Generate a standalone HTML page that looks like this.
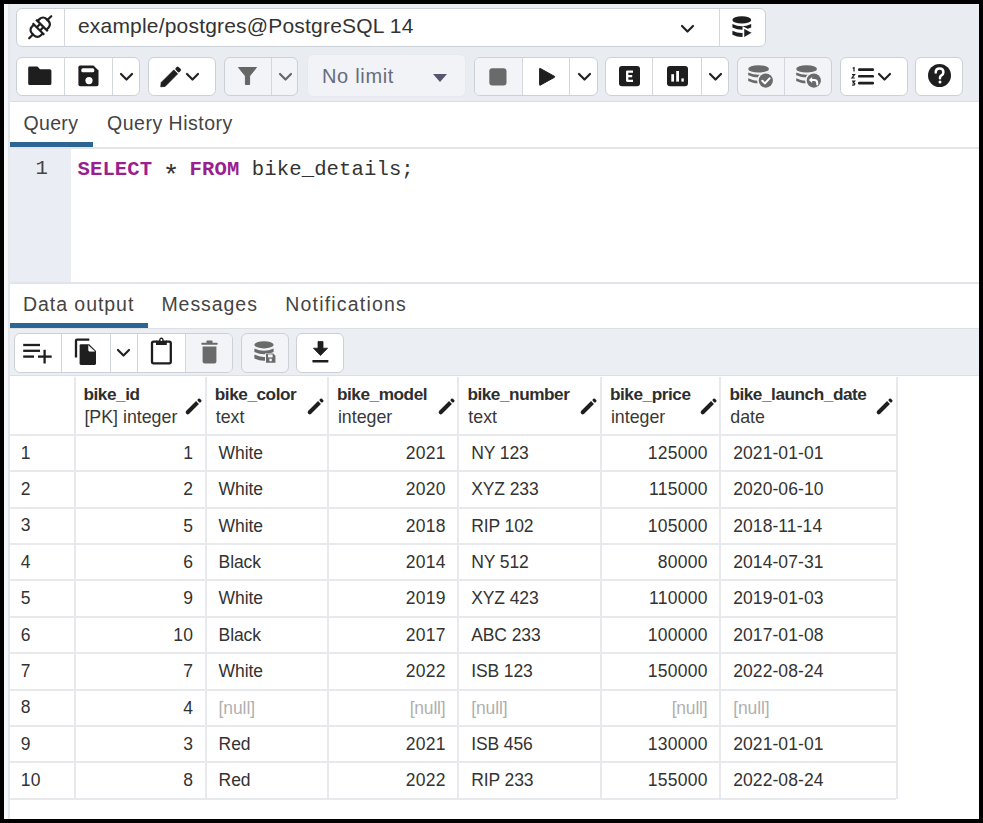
<!DOCTYPE html><html><head><meta charset="utf-8"><style>
*{box-sizing:border-box;margin:0;padding:0}
html,body{width:983px;height:823px;overflow:hidden;background:#000}
body{position:relative;font-family:"Liberation Sans",sans-serif;color:#222}
.a{position:absolute}
.g{position:absolute;border:1px solid #ccd0d7;border-radius:6px;background:#fff;overflow:hidden}
.d{background:#f2f4f7}
.dv{position:absolute;top:0;bottom:0;width:1px;background:#d3d6dc}
svg{position:absolute;overflow:visible}
.t{position:absolute;white-space:nowrap;line-height:1}
</style></head><body><div class="a" style="left:4px;top:4px;width:975px;height:815px;background:#fff;"></div><div class="a" style="left:4px;top:4px;width:5px;height:815px;background:#f6f7f9;"></div><div class="a" style="left:8px;top:4px;width:2px;height:815px;background:#e3e6ea;"></div><div class="a" style="left:10px;top:4px;width:969px;height:98px;background:#e9ecf0;"></div><div class="a" style="left:10px;top:101px;width:969px;height:1.2px;background:#d9dce2;"></div><div class="g " style="left:16px;top:8px;width:750px;height:39px"><div class="dv" style="left:47.2px"></div><div class="dv" style="left:701.5px"></div></div><svg style="left:27px;top:14px" width="26" height="26" viewBox="0 0 26 26"><g transform="translate(13.2 13.2) rotate(-45)" fill="none" stroke="#1e1e1e" stroke-width="2.2" stroke-linecap="butt">
<path d="M-2.5 -8.2 V8.2"/><path d="M2.5 -8.2 V8.2"/>
<path d="M-2.5 -2.3 H2.5 M-2.5 2.3 H2.5"/>
<path d="M2.5 -6.2 H5.6 A4.6 4.6 0 0 1 10.2 -1.6 V1.6 A4.6 4.6 0 0 1 5.6 6.2 H2.5"/>
<path d="M-2.5 -6.2 H-5.6 A4.6 4.6 0 0 0 -10.2 -1.6 V1.6 A4.6 4.6 0 0 0 -5.6 6.2 H-2.5"/>
<path d="M-10.2 0 H-15.6" stroke-linecap="round"/><path d="M10.2 0 H15.6" stroke-linecap="round"/></g></svg><div class="t" style="left:78px;top:14.82px;font-size:21px;color:#333;font-weight:normal;letter-spacing:0.19px;font-family:'Liberation Sans';">example/postgres@PostgreSQL 14</div><svg style="left:681.0px;top:24.5px" width="13" height="7" viewBox="0 0 13 7"><path d="M1 1 L6.5 6.5 L12 1" fill="none" stroke="#222" stroke-width="2.2" stroke-linecap="round" stroke-linejoin="round"/></svg><svg style="left:731px;top:15px" width="24" height="24" viewBox="0 0 24 24"><g fill="#1e1e1e">
<ellipse cx="10.8" cy="4.9" rx="9.4" ry="3.6"/>
<path d="M1.4 8.9 Q10.8 13.7 20.2 8.9 V12.4 Q10.8 17.2 1.4 12.4Z"/>
<path d="M1.4 15.8 Q10.8 20.4 20.2 15.8 V19.8 Q10.8 24.4 1.4 19.8Z"/>
</g>
<path d="M12.4 12.6 L22.2 17.8 L12.4 23.6Z" fill="#1e1e1e" stroke="#fff" stroke-width="1.7" stroke-linejoin="miter"/></svg><div class="g " style="left:16px;top:57px;width:124px;height:39px"><div class="dv" style="left:47px"></div><div class="dv" style="left:95.3px"></div></div><svg style="left:28px;top:66px" width="24" height="20" viewBox="0 0 24 20"><path d="M1.5 0.6 H9.5 L12 3.2 H21.8 Q23.4 3.2 23.4 4.8 V17.4 Q23.4 19 21.8 19 H1.6 Q0.2 19 0.2 17.4 V2 Q0.2 0.6 1.5 0.6Z" fill="#1e1e1e"/></svg><svg style="left:78px;top:65px" width="21" height="22" viewBox="0 0 21 22"><path d="M2 0.5 H15.5 L20.5 5.5 V19.5 Q20.5 21.3 18.7 21.3 H2.3 Q0.4 21.3 0.4 19.5 V2.3 Q0.4 0.5 2 0.5Z" fill="#1e1e1e"/><rect x="3.3" y="3.3" width="13" height="4" rx="1.6" fill="#fff"/><circle cx="11" cy="15.6" r="3.6" fill="#fff"/></svg><svg style="left:120.0px;top:72.7px" width="13" height="7" viewBox="0 0 13 7"><path d="M1 1 L6.5 6.5 L12 1" fill="none" stroke="#222" stroke-width="2.2" stroke-linecap="round" stroke-linejoin="round"/></svg><div class="g " style="left:148px;top:57px;width:68px;height:39px"></div><svg style="left:160px;top:65px" width="22" height="23" viewBox="0 0 22 23"><g transform="translate(11.2 11.4) rotate(45) scale(1.42)" fill="#1e1e1e"><path d="M-1.95 -4.5 H1.95 V8 L0 10.4 L-1.95 8Z" stroke="#1e1e1e" stroke-width="0.5" stroke-linejoin="round"/><rect x="-1.95" y="-8.4" width="3.9" height="2.9" rx="0.9"/></g></svg><svg style="left:185.7px;top:72.9px" width="13" height="7" viewBox="0 0 13 7"><path d="M1 1 L6.5 6.5 L12 1" fill="none" stroke="#222" stroke-width="2.2" stroke-linecap="round" stroke-linejoin="round"/></svg><div class="g d" style="left:224px;top:57px;width:74px;height:39px"><div class="dv" style="left:46px"></div></div><svg style="left:238px;top:67px" width="19" height="18" viewBox="0 0 19 18"><path d="M0.5 0.5 H18.5 L11.6 9 V17.5 H7.4 V9Z" fill="#666" stroke="#666" stroke-width="1" stroke-linejoin="round"/></svg><svg style="left:279.0px;top:72.9px" width="13" height="7" viewBox="0 0 13 7"><path d="M1 1 L6.5 6.5 L12 1" fill="none" stroke="#666" stroke-width="2.2" stroke-linecap="round" stroke-linejoin="round"/></svg><div class="g d" style="left:306.5px;top:53.8px;width:159.5px;height:43.7px;border-color:#e6e9ee;background:#f1f3f7"></div><div class="t" style="left:322px;top:65.77px;font-size:20px;color:#676b7d;font-weight:normal;letter-spacing:0.68px;font-family:'Liberation Sans';">No limit</div><svg style="left:433px;top:74px" width="14" height="8" viewBox="0 0 14 8"><path d="M0 0 H14 L7 8Z" fill="#56566e"/></svg><div class="g " style="left:474px;top:57px;width:124px;height:39px"><div class="a" style="left:-1px;top:0;width:48px;bottom:0;background:#f2f4f7"></div><div class="dv" style="left:46.5px"></div><div class="dv" style="left:94.20000000000005px"></div></div><svg style="left:489px;top:68px" width="18" height="18" viewBox="0 0 18 18"><rect x="0.3" y="0.3" width="17.2" height="17.2" rx="3" fill="#6a6a6a"/></svg><svg style="left:539px;top:67px" width="17" height="19" viewBox="0 0 17 19"><path d="M1.2 1.4 L15.6 9.4 Q16.4 9.8 15.6 10.2 L1.2 18.2 Q0.6 18.5 0.6 17.8 V1.8 Q0.6 1.1 1.2 1.4Z" fill="#1e1e1e" stroke="#1e1e1e" stroke-width="1" stroke-linejoin="round"/></svg><svg style="left:577.7px;top:72.7px" width="13" height="7" viewBox="0 0 13 7"><path d="M1 1 L6.5 6.5 L12 1" fill="none" stroke="#222" stroke-width="2.2" stroke-linecap="round" stroke-linejoin="round"/></svg><div class="g " style="left:605px;top:57px;width:124px;height:39px"><div class="dv" style="left:46.200000000000045px"></div><div class="dv" style="left:94.60000000000002px"></div></div><svg style="left:618.5px;top:66px" width="21" height="20.5" viewBox="0 0 21 20.5"><rect x="0" y="0" width="21" height="20.2" rx="3" fill="#1e1e1e"/><path d="M14 5.6 H8.2 V14.8 H14 M8.2 10.2 H13.2" fill="none" stroke="#fff" stroke-width="2.3" stroke-linejoin="round"/></svg><svg style="left:666.5px;top:66px" width="21" height="20.5" viewBox="0 0 21 20.5"><rect x="0" y="0" width="21" height="20.2" rx="3" fill="#1e1e1e"/><rect x="4.3" y="8.2" width="2.7" height="7.4" fill="#fff"/><rect x="9.2" y="5" width="2.8" height="10.6" fill="#fff"/><rect x="14.4" y="12.4" width="2.4" height="3.2" fill="#fff"/></svg><svg style="left:708.5px;top:72.7px" width="13" height="7" viewBox="0 0 13 7"><path d="M1 1 L6.5 6.5 L12 1" fill="none" stroke="#222" stroke-width="2.2" stroke-linecap="round" stroke-linejoin="round"/></svg><div class="g d" style="left:737px;top:57px;width:95px;height:39px"><div class="dv" style="left:45.799999999999955px"></div></div><svg style="left:747.5px;top:64.8px" width="26" height="24" viewBox="0 0 26 24"><g fill="#6a6a6a">
<ellipse cx="10.6" cy="3.9" rx="10.4" ry="3.7"/>
<path d="M0.2 7.4 Q10.6 12 21 7.4 V10.2 Q10.6 14.8 0.2 10.2Z"/>
<path d="M0.2 13.2 Q10.6 17.8 16 14 V17 Q10.6 20.6 0.2 16Z"/>
</g><circle cx="17.8" cy="15.6" r="8.8" fill="#f2f4f7"/><circle cx="17.8" cy="15.6" r="7.1" fill="#6a6a6a"/><path d="M14.3 15.8 L16.9 18.4 L21.6 13.4" fill="none" stroke="#fff" stroke-width="2" stroke-linecap="round" stroke-linejoin="round"/></svg><svg style="left:796px;top:64.8px" width="26" height="24" viewBox="0 0 26 24"><g fill="#6a6a6a">
<ellipse cx="10.6" cy="3.9" rx="10.4" ry="3.7"/>
<path d="M0.2 7.4 Q10.6 12 21 7.4 V10.2 Q10.6 14.8 0.2 10.2Z"/>
<path d="M0.2 13.2 Q10.6 17.8 16 14 V17 Q10.6 20.6 0.2 16Z"/>
</g><circle cx="17.8" cy="15.6" r="8.8" fill="#f2f4f7"/><circle cx="17.8" cy="15.6" r="7.1" fill="#6a6a6a"/><path d="M16.2 12 L12.8 15 L16.2 18 Z" fill="#fff"/><path d="M15.5 15 H18 Q21.3 15 21.3 18.4 V19.6" fill="none" stroke="#fff" stroke-width="2" stroke-linecap="round"/></svg><div class="g " style="left:840px;top:57px;width:68px;height:39px"></div><svg style="left:851px;top:67px" width="24" height="18" viewBox="0 0 24 18"><g fill="#1e1e1e"><rect x="7" y="1.3" width="16" height="2.6" rx="1.2"/><rect x="7" y="8" width="16" height="2.6" rx="1.2"/><rect x="7" y="14.8" width="16" height="2.6" rx="1.2"/></g>
<g fill="none" stroke="#1e1e1e" stroke-width="1.2"><path d="M1.6 1.2 L3 0.6 V4.6"/><path d="M1 7.6 H3.6 L1 11 H3.8"/><path d="M1 14.2 H3.6 L2.2 15.8 Q4 16 3.8 17 Q3.4 18.4 1 18"/></g></svg><svg style="left:878.0px;top:72.7px" width="13" height="7" viewBox="0 0 13 7"><path d="M1 1 L6.5 6.5 L12 1" fill="none" stroke="#222" stroke-width="2.2" stroke-linecap="round" stroke-linejoin="round"/></svg><div class="g " style="left:915px;top:57px;width:48px;height:39px"></div><svg style="left:927.5px;top:64.3px" width="23" height="23" viewBox="0 0 23 23"><circle cx="11.5" cy="11.5" r="11.5" fill="#1e1e1e"/><path d="M7.7 8.6 Q7.7 4.6 11.6 4.6 Q15.4 4.6 15.4 8.2 Q15.4 10.2 13.4 11.4 Q12 12.2 12 13.6 V14.2" fill="none" stroke="#fff" stroke-width="2.5" stroke-linecap="round"/><circle cx="12" cy="17.9" r="1.5" fill="#fff"/></svg><div class="a" style="left:10px;top:102.2px;width:969px;height:46px;background:#fff;"></div><div class="t" style="left:23.6px;top:114.19px;font-size:19.5px;color:#444;font-weight:normal;letter-spacing:0.3px;font-family:'Liberation Sans';">Query</div><div class="t" style="left:107.1px;top:114.19px;font-size:19.5px;color:#444;font-weight:normal;letter-spacing:0.5px;font-family:'Liberation Sans';">Query History</div><div class="a" style="left:10px;top:147px;width:969px;height:1.5px;background:#e3e5e9;"></div><div class="a" style="left:10px;top:142.4px;width:83px;height:4.6px;background:#2c6493;"></div><div class="a" style="left:10px;top:148.5px;width:61px;height:133.9px;background:#eaedf3;"></div><div class="t" style="left:35.5px;top:159.00px;font-size:20.6px;color:#444;font-weight:normal;letter-spacing:0px;font-family:'Liberation Mono';">1</div><div class="t" style="left:77.5px;top:160.41px;font-size:20.6px;font-family:'Liberation Mono';color:#333;letter-spacing:0.1px"><b style="color:#9a1f8f">SELECT</b> <span style="display:inline-block;width:12.36px;text-align:center;position:relative;top:7px;transform:scale(1.35)">*</span> <b style="color:#9a1f8f">FROM</b> bike_details;</div><div class="a" style="left:10px;top:282.4px;width:969px;height:1.6px;background:#e1e4e9;"></div><div class="t" style="left:23px;top:295.49px;font-size:19.5px;color:#444;font-weight:normal;letter-spacing:0.95px;font-family:'Liberation Sans';">Data output</div><div class="t" style="left:161.4px;top:295.49px;font-size:19.5px;color:#444;font-weight:normal;letter-spacing:0.95px;font-family:'Liberation Sans';">Messages</div><div class="t" style="left:285.2px;top:295.49px;font-size:19.5px;color:#444;font-weight:normal;letter-spacing:1.2px;font-family:'Liberation Sans';">Notifications</div><div class="a" style="left:10px;top:323.3px;width:138px;height:4.6px;background:#2c6493;"></div><div class="a" style="left:10px;top:327.8px;width:969px;height:48.7px;background:#ebeef3;"></div><div class="a" style="left:10px;top:327.8px;width:969px;height:1.4px;background:#dcdfe4;"></div><div class="a" style="left:10px;top:374.6px;width:969px;height:1.8px;background:#dcdfe4;"></div><div class="g " style="left:14px;top:332.5px;width:219px;height:40px"><div class="a" style="left:170px;top:0;width:48px;bottom:0;background:#f2f4f7"></div><div class="dv" style="left:46.3px"></div><div class="dv" style="left:94.5px"></div><div class="dv" style="left:122px"></div><div class="dv" style="left:170px"></div></div><div class="g d" style="left:240.5px;top:332.5px;width:48.5px;height:40px"></div><div class="g " style="left:296px;top:332.5px;width:48px;height:40px"></div><svg style="left:22px;top:343px" width="31" height="22" viewBox="0 0 31 22"><g stroke="#1e1e1e" stroke-width="2.3" fill="none"><path d="M1.2 2 H18"/><path d="M1.2 7.8 H18"/><path d="M1.2 13.6 H12"/><path d="M16 13.6 H29.7"/><path d="M22.6 6.8 V20.5"/></g></svg><svg style="left:74px;top:338px" width="23" height="28" viewBox="0 0 23 28"><path d="M2 19.4 V2.6 Q2 1.6 3 1.6 H15.3" fill="none" stroke="#1e1e1e" stroke-width="2.3"/><path d="M7 6.2 H15.2 L22 13 V25.6 Q22 27 20.6 27 H7 Q5.6 27 5.6 25.6 V7.6 Q5.6 6.2 7 6.2Z" fill="#1e1e1e"/><path d="M14.6 7.4 V12.2 Q14.6 13.2 15.6 13.2 H20.8" fill="#fff" stroke="#fff" stroke-width="0.6"/></svg><svg style="left:117.0px;top:349.0px" width="13" height="7" viewBox="0 0 13 7"><path d="M1 1 L6.5 6.5 L12 1" fill="none" stroke="#222" stroke-width="2.2" stroke-linecap="round" stroke-linejoin="round"/></svg><svg style="left:150px;top:337px" width="23" height="28" viewBox="0 0 23 28"><path d="M6.8 4.6 H3.6 Q2 4.6 2 6.2 V24.8 Q2 26.4 3.6 26.4 H19.2 Q20.8 26.4 20.8 24.8 V6.2 Q20.8 4.6 19.2 4.6 H16" fill="none" stroke="#1e1e1e" stroke-width="2.3"/><path d="M6 3.4 H9 Q9.4 0.4 11.4 0.4 Q13.4 0.4 13.8 3.4 H16.8 V8 H6Z" fill="#1e1e1e"/><circle cx="11.4" cy="3" r="1" fill="#fff"/></svg><svg style="left:201px;top:340px" width="17" height="24" viewBox="0 0 17 24"><g fill="#6a6a6a"><rect x="0.5" y="2.8" width="16" height="2" rx="0.5"/><rect x="5.5" y="0.6" width="6" height="2.6" rx="0.6"/><path d="M1.6 6.4 H15.4 V21.6 Q15.4 23.6 13.4 23.6 H3.6 Q1.6 23.6 1.6 21.6Z"/></g></svg><svg style="left:254px;top:341px" width="22" height="23" viewBox="0 0 22 23"><g fill="#6a6a6a"><ellipse cx="10" cy="3.8" rx="9.6" ry="3.6"/><path d="M0.4 7.4 Q10 12 19.6 7.4 V11 Q10 15.6 0.4 11Z"/><path d="M0.4 13.6 Q6 16.4 11 15.9 V19.8 Q6 20.2 0.4 17.4Z"/></g><rect x="11" y="12" width="11" height="11" rx="1.2" fill="#f2f4f7"/><path d="M12 12.6 H19.2 L21.4 14.8 V21.8 H12Z" fill="#6a6a6a"/><rect x="14" y="13.4" width="4.6" height="3" fill="#f2f4f7"/><circle cx="16.6" cy="19" r="1.4" fill="#f2f4f7"/></svg><svg style="left:312px;top:341px" width="17" height="23" viewBox="0 0 17 23"><path d="M6 0.6 H11 V7.2 H15.6 L8.5 14.6 L1.4 7.2 H6Z" fill="#1e1e1e" stroke="#1e1e1e" stroke-width="0.8" stroke-linejoin="round"/><rect x="0.4" y="19" width="16" height="2.4" rx="0.6" fill="#1e1e1e"/></svg><div class="a" style="left:10px;top:376.4px;width:969px;height:443px;background:#fff;"></div><div class="a" style="left:10px;top:433.7px;width:886px;height:2px;background:#e7e9ec;"></div><div class="a" style="left:10px;top:470.09999999999997px;width:886px;height:2px;background:#e7e9ec;"></div><div class="a" style="left:10px;top:506.5px;width:886px;height:2px;background:#e7e9ec;"></div><div class="a" style="left:10px;top:542.9px;width:886px;height:2px;background:#e7e9ec;"></div><div class="a" style="left:10px;top:579.3px;width:886px;height:2px;background:#e7e9ec;"></div><div class="a" style="left:10px;top:615.7px;width:886px;height:2px;background:#e7e9ec;"></div><div class="a" style="left:10px;top:652.0999999999999px;width:886px;height:2px;background:#e7e9ec;"></div><div class="a" style="left:10px;top:688.5px;width:886px;height:2px;background:#e7e9ec;"></div><div class="a" style="left:10px;top:724.9px;width:886px;height:2px;background:#e7e9ec;"></div><div class="a" style="left:10px;top:761.3px;width:886px;height:2px;background:#e7e9ec;"></div><div class="a" style="left:10px;top:797.7px;width:886px;height:2px;background:#e7e9ec;"></div><div class="a" style="left:73.5px;top:377px;width:2px;height:421.70000000000005px;background:#e7e9ec;"></div><div class="a" style="left:204.8px;top:377px;width:2px;height:421.70000000000005px;background:#e7e9ec;"></div><div class="a" style="left:327px;top:377px;width:2px;height:421.70000000000005px;background:#e7e9ec;"></div><div class="a" style="left:457.4px;top:377px;width:2px;height:421.70000000000005px;background:#e7e9ec;"></div><div class="a" style="left:600px;top:377px;width:2px;height:421.70000000000005px;background:#e7e9ec;"></div><div class="a" style="left:719.4px;top:377px;width:2px;height:421.70000000000005px;background:#e7e9ec;"></div><div class="a" style="left:895.6px;top:377px;width:2px;height:421.70000000000005px;background:#e7e9ec;"></div><div class="t" style="left:83.5px;top:385.94px;font-size:17.2px;color:#2e2e2e;font-weight:bold;letter-spacing:-0.45px;font-family:'Liberation Sans';">bike_id</div><div class="t" style="left:84.4px;top:408.83px;font-size:17.8px;color:#383838;font-weight:normal;letter-spacing:0px;font-family:'Liberation Sans';">[PK] integer</div><svg style="left:185.9px;top:397.9px" width="16" height="16" viewBox="0 0 16 16"><g transform="translate(8 8) rotate(45) scale(1.08)" fill="#1e1e1e"><path d="M-1.9 -4.6 H1.9 V8.2 A1.9 1.9 0 0 1 -1.9 8.2Z"/><rect x="-1.9" y="-8.6" width="3.8" height="2.8" rx="1.1"/></g></svg><div class="t" style="left:214.8px;top:385.94px;font-size:17.2px;color:#2e2e2e;font-weight:bold;letter-spacing:-0.45px;font-family:'Liberation Sans';">bike_color</div><div class="t" style="left:215.70000000000002px;top:408.83px;font-size:17.8px;color:#383838;font-weight:normal;letter-spacing:0px;font-family:'Liberation Sans';">text</div><svg style="left:308.1px;top:397.9px" width="16" height="16" viewBox="0 0 16 16"><g transform="translate(8 8) rotate(45) scale(1.08)" fill="#1e1e1e"><path d="M-1.9 -4.6 H1.9 V8.2 A1.9 1.9 0 0 1 -1.9 8.2Z"/><rect x="-1.9" y="-8.6" width="3.8" height="2.8" rx="1.1"/></g></svg><div class="t" style="left:337.0px;top:385.94px;font-size:17.2px;color:#2e2e2e;font-weight:bold;letter-spacing:-0.45px;font-family:'Liberation Sans';">bike_model</div><div class="t" style="left:337.9px;top:408.83px;font-size:17.8px;color:#383838;font-weight:normal;letter-spacing:0px;font-family:'Liberation Sans';">integer</div><svg style="left:438.5px;top:397.9px" width="16" height="16" viewBox="0 0 16 16"><g transform="translate(8 8) rotate(45) scale(1.08)" fill="#1e1e1e"><path d="M-1.9 -4.6 H1.9 V8.2 A1.9 1.9 0 0 1 -1.9 8.2Z"/><rect x="-1.9" y="-8.6" width="3.8" height="2.8" rx="1.1"/></g></svg><div class="t" style="left:467.4px;top:385.94px;font-size:17.2px;color:#2e2e2e;font-weight:bold;letter-spacing:-0.45px;font-family:'Liberation Sans';">bike_number</div><div class="t" style="left:468.29999999999995px;top:408.83px;font-size:17.8px;color:#383838;font-weight:normal;letter-spacing:0px;font-family:'Liberation Sans';">text</div><svg style="left:581.1px;top:397.9px" width="16" height="16" viewBox="0 0 16 16"><g transform="translate(8 8) rotate(45) scale(1.08)" fill="#1e1e1e"><path d="M-1.9 -4.6 H1.9 V8.2 A1.9 1.9 0 0 1 -1.9 8.2Z"/><rect x="-1.9" y="-8.6" width="3.8" height="2.8" rx="1.1"/></g></svg><div class="t" style="left:610.0px;top:385.94px;font-size:17.2px;color:#2e2e2e;font-weight:bold;letter-spacing:-0.45px;font-family:'Liberation Sans';">bike_price</div><div class="t" style="left:610.9px;top:408.83px;font-size:17.8px;color:#383838;font-weight:normal;letter-spacing:0px;font-family:'Liberation Sans';">integer</div><svg style="left:700.5px;top:397.9px" width="16" height="16" viewBox="0 0 16 16"><g transform="translate(8 8) rotate(45) scale(1.08)" fill="#1e1e1e"><path d="M-1.9 -4.6 H1.9 V8.2 A1.9 1.9 0 0 1 -1.9 8.2Z"/><rect x="-1.9" y="-8.6" width="3.8" height="2.8" rx="1.1"/></g></svg><div class="t" style="left:729.4px;top:385.94px;font-size:17.2px;color:#2e2e2e;font-weight:bold;letter-spacing:-0.45px;font-family:'Liberation Sans';">bike_launch_date</div><div class="t" style="left:730.3px;top:408.83px;font-size:17.8px;color:#383838;font-weight:normal;letter-spacing:0px;font-family:'Liberation Sans';">date</div><svg style="left:876.7px;top:397.9px" width="16" height="16" viewBox="0 0 16 16"><g transform="translate(8 8) rotate(45) scale(1.08)" fill="#1e1e1e"><path d="M-1.9 -4.6 H1.9 V8.2 A1.9 1.9 0 0 1 -1.9 8.2Z"/><rect x="-1.9" y="-8.6" width="3.8" height="2.8" rx="1.1"/></g></svg><div class="t" style="left:20.8px;top:444.69px;font-size:17.5px;color:#333;font-weight:normal;letter-spacing:0.3px;font-family:'Liberation Sans';">1</div><div class="t" style="right:790.0px;top:444.89px;font-size:17.5px;color:#333;letter-spacing:0.3px;margin-right:-0.3px">1</div><div class="t" style="left:218.60000000000002px;top:444.89px;font-size:17.5px;color:#333;font-weight:normal;letter-spacing:-0.1px;font-family:'Liberation Sans';">White</div><div class="t" style="right:537.4000000000001px;top:444.89px;font-size:17.5px;color:#333;letter-spacing:0.3px;margin-right:-0.3px">2021</div><div class="t" style="left:471.2px;top:444.89px;font-size:17.5px;color:#333;font-weight:normal;letter-spacing:-0.1px;font-family:'Liberation Sans';">NY 123</div><div class="t" style="right:275.4px;top:444.89px;font-size:17.5px;color:#333;letter-spacing:0.3px;margin-right:-0.3px">125000</div><div class="t" style="left:733.1999999999999px;top:444.89px;font-size:17.5px;color:#333;font-weight:normal;letter-spacing:0.08px;font-family:'Liberation Sans';">2021-01-01</div><div class="t" style="left:20.8px;top:481.09px;font-size:17.5px;color:#333;font-weight:normal;letter-spacing:0.3px;font-family:'Liberation Sans';">2</div><div class="t" style="right:790.0px;top:481.29px;font-size:17.5px;color:#333;letter-spacing:0.3px;margin-right:-0.3px">2</div><div class="t" style="left:218.60000000000002px;top:481.29px;font-size:17.5px;color:#333;font-weight:normal;letter-spacing:-0.1px;font-family:'Liberation Sans';">White</div><div class="t" style="right:537.4000000000001px;top:481.29px;font-size:17.5px;color:#333;letter-spacing:0.3px;margin-right:-0.3px">2020</div><div class="t" style="left:471.2px;top:481.29px;font-size:17.5px;color:#333;font-weight:normal;letter-spacing:-0.1px;font-family:'Liberation Sans';">XYZ 233</div><div class="t" style="right:275.4px;top:481.29px;font-size:17.5px;color:#333;letter-spacing:0.3px;margin-right:-0.3px">115000</div><div class="t" style="left:733.1999999999999px;top:481.29px;font-size:17.5px;color:#333;font-weight:normal;letter-spacing:0.08px;font-family:'Liberation Sans';">2020-06-10</div><div class="t" style="left:20.8px;top:517.49px;font-size:17.5px;color:#333;font-weight:normal;letter-spacing:0.3px;font-family:'Liberation Sans';">3</div><div class="t" style="right:790.0px;top:517.69px;font-size:17.5px;color:#333;letter-spacing:0.3px;margin-right:-0.3px">5</div><div class="t" style="left:218.60000000000002px;top:517.69px;font-size:17.5px;color:#333;font-weight:normal;letter-spacing:-0.1px;font-family:'Liberation Sans';">White</div><div class="t" style="right:537.4000000000001px;top:517.69px;font-size:17.5px;color:#333;letter-spacing:0.3px;margin-right:-0.3px">2018</div><div class="t" style="left:471.2px;top:517.69px;font-size:17.5px;color:#333;font-weight:normal;letter-spacing:-0.1px;font-family:'Liberation Sans';">RIP 102</div><div class="t" style="right:275.4px;top:517.69px;font-size:17.5px;color:#333;letter-spacing:0.3px;margin-right:-0.3px">105000</div><div class="t" style="left:733.1999999999999px;top:517.69px;font-size:17.5px;color:#333;font-weight:normal;letter-spacing:0.08px;font-family:'Liberation Sans';">2018-11-14</div><div class="t" style="left:20.8px;top:553.89px;font-size:17.5px;color:#333;font-weight:normal;letter-spacing:0.3px;font-family:'Liberation Sans';">4</div><div class="t" style="right:790.0px;top:554.09px;font-size:17.5px;color:#333;letter-spacing:0.3px;margin-right:-0.3px">6</div><div class="t" style="left:218.60000000000002px;top:554.09px;font-size:17.5px;color:#333;font-weight:normal;letter-spacing:-0.1px;font-family:'Liberation Sans';">Black</div><div class="t" style="right:537.4000000000001px;top:554.09px;font-size:17.5px;color:#333;letter-spacing:0.3px;margin-right:-0.3px">2014</div><div class="t" style="left:471.2px;top:554.09px;font-size:17.5px;color:#333;font-weight:normal;letter-spacing:-0.1px;font-family:'Liberation Sans';">NY 512</div><div class="t" style="right:275.4px;top:554.09px;font-size:17.5px;color:#333;letter-spacing:0.3px;margin-right:-0.3px">80000</div><div class="t" style="left:733.1999999999999px;top:554.09px;font-size:17.5px;color:#333;font-weight:normal;letter-spacing:0.08px;font-family:'Liberation Sans';">2014-07-31</div><div class="t" style="left:20.8px;top:590.29px;font-size:17.5px;color:#333;font-weight:normal;letter-spacing:0.3px;font-family:'Liberation Sans';">5</div><div class="t" style="right:790.0px;top:590.49px;font-size:17.5px;color:#333;letter-spacing:0.3px;margin-right:-0.3px">9</div><div class="t" style="left:218.60000000000002px;top:590.49px;font-size:17.5px;color:#333;font-weight:normal;letter-spacing:-0.1px;font-family:'Liberation Sans';">White</div><div class="t" style="right:537.4000000000001px;top:590.49px;font-size:17.5px;color:#333;letter-spacing:0.3px;margin-right:-0.3px">2019</div><div class="t" style="left:471.2px;top:590.49px;font-size:17.5px;color:#333;font-weight:normal;letter-spacing:-0.1px;font-family:'Liberation Sans';">XYZ 423</div><div class="t" style="right:275.4px;top:590.49px;font-size:17.5px;color:#333;letter-spacing:0.3px;margin-right:-0.3px">110000</div><div class="t" style="left:733.1999999999999px;top:590.49px;font-size:17.5px;color:#333;font-weight:normal;letter-spacing:0.08px;font-family:'Liberation Sans';">2019-01-03</div><div class="t" style="left:20.8px;top:626.69px;font-size:17.5px;color:#333;font-weight:normal;letter-spacing:0.3px;font-family:'Liberation Sans';">6</div><div class="t" style="right:790.0px;top:626.89px;font-size:17.5px;color:#333;letter-spacing:0.3px;margin-right:-0.3px">10</div><div class="t" style="left:218.60000000000002px;top:626.89px;font-size:17.5px;color:#333;font-weight:normal;letter-spacing:-0.1px;font-family:'Liberation Sans';">Black</div><div class="t" style="right:537.4000000000001px;top:626.89px;font-size:17.5px;color:#333;letter-spacing:0.3px;margin-right:-0.3px">2017</div><div class="t" style="left:471.2px;top:626.89px;font-size:17.5px;color:#333;font-weight:normal;letter-spacing:-0.1px;font-family:'Liberation Sans';">ABC 233</div><div class="t" style="right:275.4px;top:626.89px;font-size:17.5px;color:#333;letter-spacing:0.3px;margin-right:-0.3px">100000</div><div class="t" style="left:733.1999999999999px;top:626.89px;font-size:17.5px;color:#333;font-weight:normal;letter-spacing:0.08px;font-family:'Liberation Sans';">2017-01-08</div><div class="t" style="left:20.8px;top:663.09px;font-size:17.5px;color:#333;font-weight:normal;letter-spacing:0.3px;font-family:'Liberation Sans';">7</div><div class="t" style="right:790.0px;top:663.29px;font-size:17.5px;color:#333;letter-spacing:0.3px;margin-right:-0.3px">7</div><div class="t" style="left:218.60000000000002px;top:663.29px;font-size:17.5px;color:#333;font-weight:normal;letter-spacing:-0.1px;font-family:'Liberation Sans';">White</div><div class="t" style="right:537.4000000000001px;top:663.29px;font-size:17.5px;color:#333;letter-spacing:0.3px;margin-right:-0.3px">2022</div><div class="t" style="left:471.2px;top:663.29px;font-size:17.5px;color:#333;font-weight:normal;letter-spacing:-0.1px;font-family:'Liberation Sans';">ISB 123</div><div class="t" style="right:275.4px;top:663.29px;font-size:17.5px;color:#333;letter-spacing:0.3px;margin-right:-0.3px">150000</div><div class="t" style="left:733.1999999999999px;top:663.29px;font-size:17.5px;color:#333;font-weight:normal;letter-spacing:0.08px;font-family:'Liberation Sans';">2022-08-24</div><div class="t" style="left:20.8px;top:699.49px;font-size:17.5px;color:#333;font-weight:normal;letter-spacing:0.3px;font-family:'Liberation Sans';">8</div><div class="t" style="right:790.0px;top:699.69px;font-size:17.5px;color:#333;letter-spacing:0.3px;margin-right:-0.3px">4</div><div class="t" style="left:218.60000000000002px;top:699.69px;font-size:17.5px;color:#b0b0b0;font-weight:normal;letter-spacing:-0.1px;font-family:'Liberation Sans';">[null]</div><div class="t" style="right:537.4000000000001px;top:699.69px;font-size:17.5px;color:#b0b0b0;letter-spacing:-0.2px;margin-right:0.2px">[null]</div><div class="t" style="left:471.2px;top:699.69px;font-size:17.5px;color:#b0b0b0;font-weight:normal;letter-spacing:-0.1px;font-family:'Liberation Sans';">[null]</div><div class="t" style="right:275.4px;top:699.69px;font-size:17.5px;color:#b0b0b0;letter-spacing:-0.2px;margin-right:0.2px">[null]</div><div class="t" style="left:733.1999999999999px;top:699.69px;font-size:17.5px;color:#b0b0b0;font-weight:normal;letter-spacing:-0.1px;font-family:'Liberation Sans';">[null]</div><div class="t" style="left:20.8px;top:735.89px;font-size:17.5px;color:#333;font-weight:normal;letter-spacing:0.3px;font-family:'Liberation Sans';">9</div><div class="t" style="right:790.0px;top:736.09px;font-size:17.5px;color:#333;letter-spacing:0.3px;margin-right:-0.3px">3</div><div class="t" style="left:218.60000000000002px;top:736.09px;font-size:17.5px;color:#333;font-weight:normal;letter-spacing:-0.1px;font-family:'Liberation Sans';">Red</div><div class="t" style="right:537.4000000000001px;top:736.09px;font-size:17.5px;color:#333;letter-spacing:0.3px;margin-right:-0.3px">2021</div><div class="t" style="left:471.2px;top:736.09px;font-size:17.5px;color:#333;font-weight:normal;letter-spacing:-0.1px;font-family:'Liberation Sans';">ISB 456</div><div class="t" style="right:275.4px;top:736.09px;font-size:17.5px;color:#333;letter-spacing:0.3px;margin-right:-0.3px">130000</div><div class="t" style="left:733.1999999999999px;top:736.09px;font-size:17.5px;color:#333;font-weight:normal;letter-spacing:0.08px;font-family:'Liberation Sans';">2021-01-01</div><div class="t" style="left:20.8px;top:772.29px;font-size:17.5px;color:#333;font-weight:normal;letter-spacing:0.3px;font-family:'Liberation Sans';">10</div><div class="t" style="right:790.0px;top:772.49px;font-size:17.5px;color:#333;letter-spacing:0.3px;margin-right:-0.3px">8</div><div class="t" style="left:218.60000000000002px;top:772.49px;font-size:17.5px;color:#333;font-weight:normal;letter-spacing:-0.1px;font-family:'Liberation Sans';">Red</div><div class="t" style="right:537.4000000000001px;top:772.49px;font-size:17.5px;color:#333;letter-spacing:0.3px;margin-right:-0.3px">2022</div><div class="t" style="left:471.2px;top:772.49px;font-size:17.5px;color:#333;font-weight:normal;letter-spacing:-0.1px;font-family:'Liberation Sans';">RIP 233</div><div class="t" style="right:275.4px;top:772.49px;font-size:17.5px;color:#333;letter-spacing:0.3px;margin-right:-0.3px">155000</div><div class="t" style="left:733.1999999999999px;top:772.49px;font-size:17.5px;color:#333;font-weight:normal;letter-spacing:0.08px;font-family:'Liberation Sans';">2022-08-24</div></body></html>
